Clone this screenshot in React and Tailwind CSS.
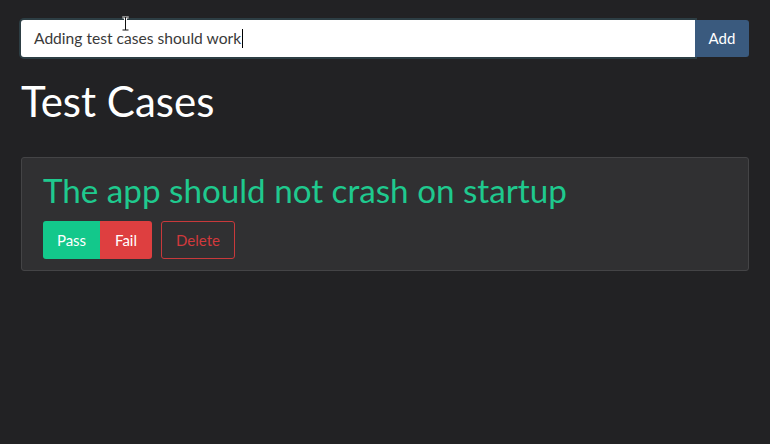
import { useState } from 'react'

const cases = [{ id: 1, title: 'The app should not crash on startup' }]

function CaseCard({ title }) {
  return (
    <div className="mt-[32px] rounded-[3px] border border-[#444446] bg-[#303032] px-[21px] pt-[10px] pb-[11px]">
      <h2 className="text-[33.2px] leading-[44px] text-[#1fc98e]">{title}</h2>
      <div className="mt-[9px] flex items-center">
        <button className="h-[38px] w-[57px] rounded-l-[3px] bg-[#13c88b] text-[15px] text-white">Pass</button>
        <button className="h-[38px] w-[52px] rounded-r-[3px] bg-[#de3f40] text-[15px] text-white">Fail</button>
        <button className="ml-[9px] h-[38px] w-[74px] rounded-[3px] border border-[#c8393b] text-[15px] text-[#d2393c]">Delete</button>
      </div>
    </div>
  )
}

export default function App() {
  const [text] = useState('Adding test cases should work')

  return (
    <div className="min-h-[444px] bg-[#222224] px-[21px] pt-[20px] font-['Lato',sans-serif]">
      {/* Input row */}
      <div className="relative flex h-[37px]">
        <div className="flex flex-1 items-center rounded-l-[3px] bg-white pl-[13px] text-[15.6px] text-[#3a3a3a] ring-2 ring-[#2d3e44]">
          <span>{text}</span>
          <span className="ml-[1px] h-[19px] w-[1px] bg-black"></span>
        </div>
        <button className="w-[54px] rounded-r-[3px] bg-[#3a5a7e] text-[15px] text-white">Add</button>
        {/* mouse cursor */}
        <svg className="absolute left-[100px] top-[-4px]" width="9" height="15" viewBox="0 0 9 15">
          <path d="M1.5 1h6M4.5 1v13M1.5 14h6" stroke="#fff" strokeWidth="3" fill="none" />
          <path d="M1.5 1h6M4.5 1v13M1.5 14h6" stroke="#111" strokeWidth="1" fill="none" />
        </svg>
      </div>

      <h1 className="mt-[20px] text-[42px] leading-[48px] text-white">Test Cases</h1>

      {cases.map(c => (
        <CaseCard key={c.id} title={c.title} />
      ))}
    </div>
  )
}
